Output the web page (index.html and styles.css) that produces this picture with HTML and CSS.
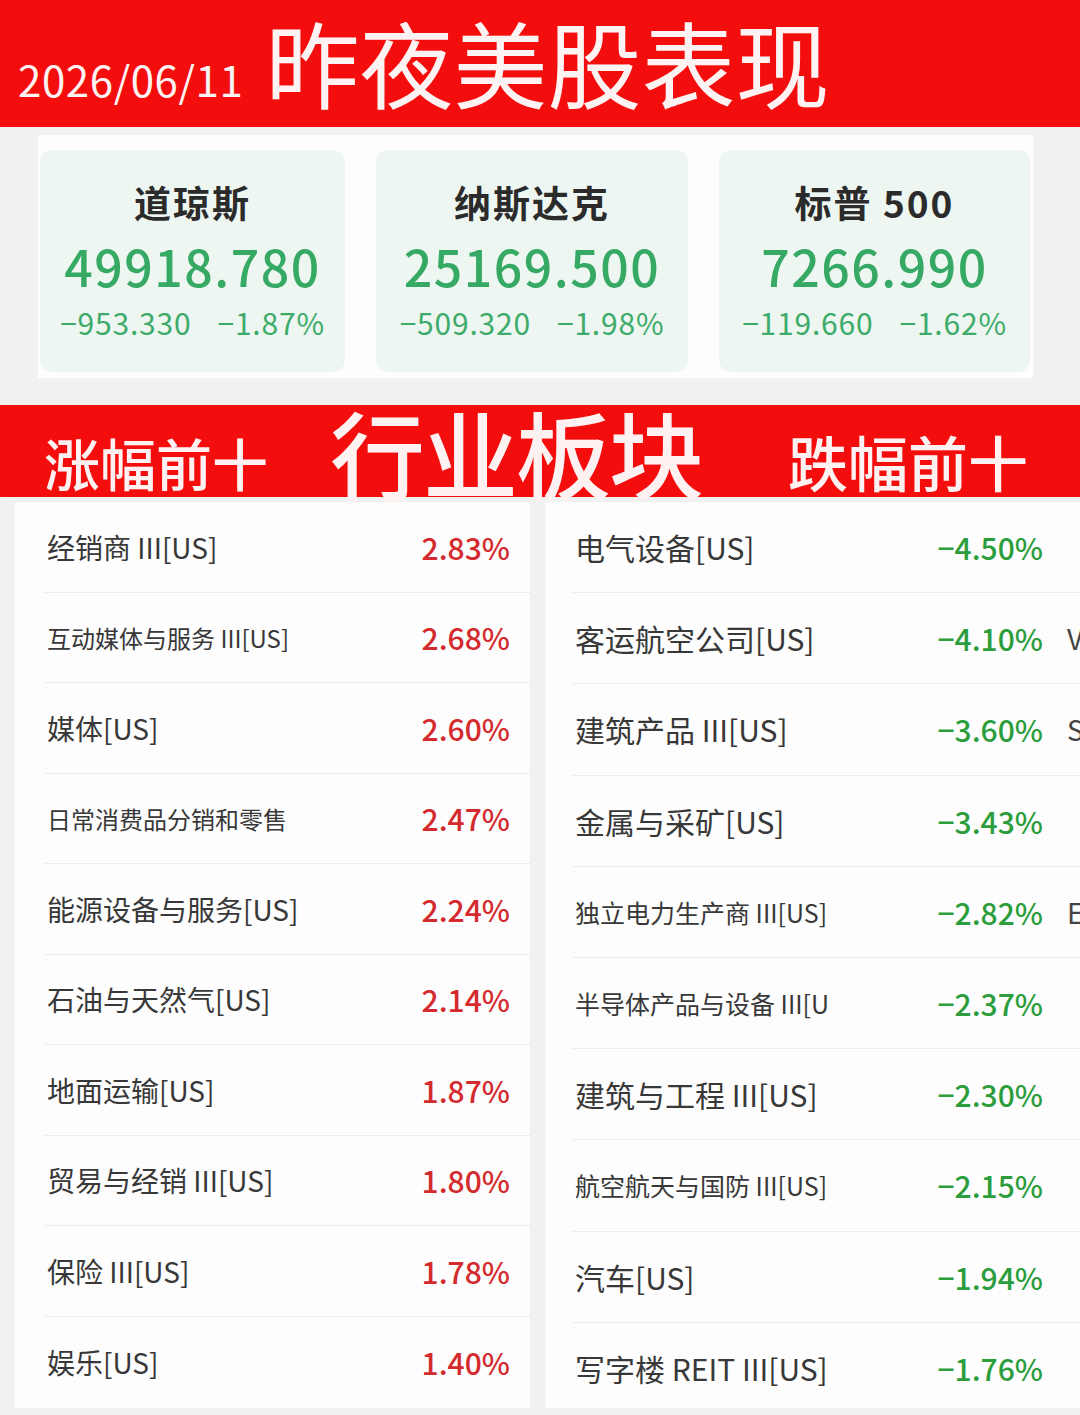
FILE: index.html
```html
<!DOCTYPE html>
<html lang="zh-CN">
<head>
<meta charset="utf-8">
<title>昨夜美股表现</title>
<link rel="stylesheet" href="styles.css">
</head>
<body>
<div class="page">
  <header class="top">
    <div class="date">2026/06/11</div>
    <h1 class="title">昨夜美股表现</h1>
  </header>

  <section class="indices">
    <div class="panel">
      <div class="card">
        <div class="card-name">道琼斯</div>
        <div class="card-value">49918.780</div>
        <div class="card-change"><span>−953.330</span><span>−1.87%</span></div>
      </div>
      <div class="card">
        <div class="card-name">纳斯达克</div>
        <div class="card-value">25169.500</div>
        <div class="card-change"><span>−509.320</span><span>−1.98%</span></div>
      </div>
      <div class="card">
        <div class="card-name">标普 500</div>
        <div class="card-value">7266.990</div>
        <div class="card-change"><span>−119.660</span><span>−1.62%</span></div>
      </div>
    </div>
  </section>

  <section class="band">
    <div class="band-side band-up">涨幅前十</div>
    <div class="band-main">行业板块</div>
    <div class="band-side band-down">跌幅前十</div>
  </section>

  <section class="lists">
    <div class="list list-up">
      <div class="row"><span class="name">经销商 III[US]</span><span class="val up">2.83%</span></div>
      <div class="row"><span class="name sm">互动媒体与服务 III[US]</span><span class="val up">2.68%</span></div>
      <div class="row"><span class="name">媒体[US]</span><span class="val up">2.60%</span></div>
      <div class="row"><span class="name sm">日常消费品分销和零售</span><span class="val up">2.47%</span></div>
      <div class="row"><span class="name">能源设备与服务[US]</span><span class="val up">2.24%</span></div>
      <div class="row"><span class="name">石油与天然气[US]</span><span class="val up">2.14%</span></div>
      <div class="row"><span class="name">地面运输[US]</span><span class="val up">1.87%</span></div>
      <div class="row"><span class="name">贸易与经销 III[US]</span><span class="val up">1.80%</span></div>
      <div class="row"><span class="name">保险 III[US]</span><span class="val up">1.78%</span></div>
      <div class="row"><span class="name">娱乐[US]</span><span class="val up">1.40%</span></div>
    </div>
    <div class="list list-down">
      <div class="row"><span class="name">电气设备[US]</span><span class="val down">−4.50%</span><span class="extra"></span></div>
      <div class="row"><span class="name">客运航空公司[US]</span><span class="val down">−4.10%</span><span class="extra">V</span></div>
      <div class="row"><span class="name">建筑产品 III[US]</span><span class="val down">−3.60%</span><span class="extra">S</span></div>
      <div class="row"><span class="name">金属与采矿[US]</span><span class="val down">−3.43%</span><span class="extra"></span></div>
      <div class="row"><span class="name sm">独立电力生产商 III[US]</span><span class="val down">−2.82%</span><span class="extra">E</span></div>
      <div class="row"><span class="name sm">半导体产品与设备 III[U</span><span class="val down">−2.37%</span><span class="extra"></span></div>
      <div class="row"><span class="name">建筑与工程 III[US]</span><span class="val down">−2.30%</span><span class="extra"></span></div>
      <div class="row"><span class="name sm">航空航天与国防 III[US]</span><span class="val down">−2.15%</span><span class="extra"></span></div>
      <div class="row"><span class="name">汽车[US]</span><span class="val down">−1.94%</span><span class="extra"></span></div>
      <div class="row"><span class="name">写字楼 REIT III[US]</span><span class="val down">−1.76%</span><span class="extra"></span></div>
    </div>
  </section>
</div>
</body>
</html>
```

FILE: styles.css
```css
* { box-sizing: border-box; }

html, body {
  margin: 0;
  padding: 0;
  background: #f1f1f1;
}

body {
  font-family: "Noto Sans CJK SC", "Noto Sans", sans-serif;
  color: #333;
}

.page {
  width: 1080px;
  height: 1415px;
  overflow: hidden;
  background: #f1f1f1;
}

/* ---------- header ---------- */
.top {
  height: 127px;
  background: #f40d0d;
  display: flex;
  align-items: flex-start;
  padding-left: 18px;
}

.date {
  color: #fdf3f3;
  font-size: 42px;
  line-height: 42px;
  margin-top: 58px;
  letter-spacing: 0.6px;
}

.title {
  margin: 14px 0 0 22px;
  color: #fdf3f3;
  font-size: 94px;
  line-height: 94px;
  font-weight: 400;
  letter-spacing: 0;
}

/* ---------- indices ---------- */
.indices {
  padding: 8px 47px 27px 38px;
}

.panel {
  background: #fdfdfd;
  padding: 15px 4px 6px 2px;
  display: grid;
  grid-template-columns: 305px 312px 311px;
  column-gap: 31px;
}

.card {
  background: #eef6f1;
  border-radius: 12px;
  height: 222px;
  display: flex;
  flex-direction: column;
  align-items: center;
  padding-top: 29px;
}

.card-name {
  font-size: 37px;
  line-height: 46px;
  font-weight: 700;
  color: #2b2b2b;
  letter-spacing: 2px;
}

.card-value {
  margin-top: 15px;
  font-size: 50px;
  line-height: 50px;
  font-weight: 500;
  color: #36a964;
  letter-spacing: 1.5px;
}

.card-change {
  margin-top: 14px;
  display: flex;
  gap: 26px;
  font-size: 30px;
  line-height: 36px;
  color: #3dab6a;
  letter-spacing: 0.8px;
}

/* ---------- band ---------- */
.band {
  height: 92px;
  background: #f40d0d;
  display: flex;
  align-items: flex-start;
  padding-left: 44px;
}

.band-side {
  color: #fdf1f1;
  font-size: 56px;
  line-height: 56px;
  margin-top: 29px;
  font-weight: 500;
}

.band-down {
  font-size: 60px;
  line-height: 60px;
  margin-top: 26px;
  margin-left: 86px;
}

.band-main {
  color: #fdf1f1;
  font-size: 95px;
  line-height: 95px;
  margin-top: -1px;
  margin-left: 62px;
  font-weight: 500;
  letter-spacing: -2px;
}

/* ---------- lists ---------- */
.lists {
  display: grid;
  grid-template-columns: 515px 560px;
  column-gap: 15px;
  padding: 5px 0 0 15px;
}

.list {
  background: #fdfdfd;
  height: 906px;
}

.row {
  display: flex;
  align-items: center;
  border-bottom: 1px solid #ececec;
}

.row:last-child { border-bottom: none; }

.list-up .row {
  height: 90.5px;
  margin-left: 30px;
  padding: 0 20px 0 2px;
}

.list-down .row {
  height: 91.2px;
  margin-left: 28px;
  padding-left: 2px;
}

.name {
  flex: 1;
  font-size: 28px;
  color: #383838;
  white-space: nowrap;
}

.name.sm { font-size: 24px; }

.list-down .name { font-size: 30px; }
.list-down .name.sm { font-size: 25px; }

.val {
  font-size: 30px;
  font-weight: 500;
  white-space: nowrap;
}

.val.up { color: #d42a2e; }
.val.down { color: #2c9d3c; }

.list-down .val { width: 130px; text-align: right; }

.extra {
  width: 62px;
  padding-left: 24px;
  font-size: 28px;
  color: #444;
}
```
